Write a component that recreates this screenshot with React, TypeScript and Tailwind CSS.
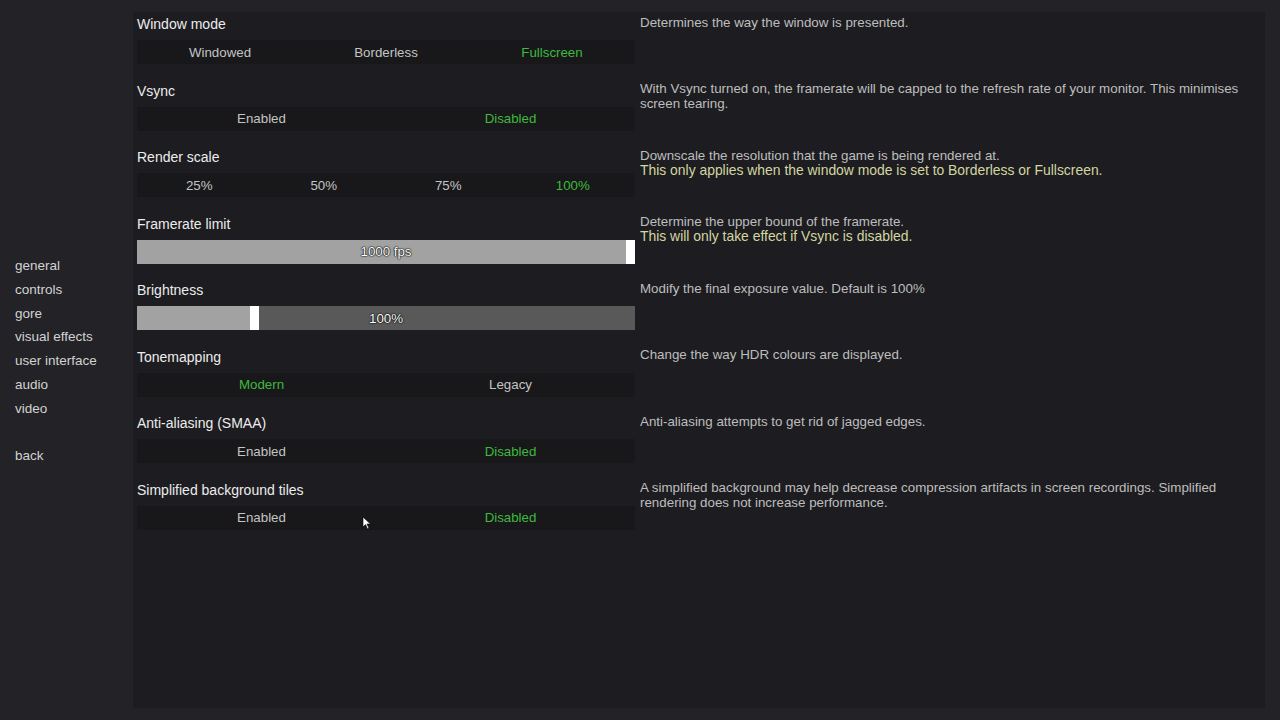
import React from "react";

type Opt = { kind: "options"; options: string[]; active: number };
type Slider = { kind: "slider"; text: string; fill: number; track: string };
type Row = {
  label: string;
  control: Opt | Slider;
  desc: string;
  note?: string;
};

const rows: Row[] = [
  {
    label: "Window mode",
    control: { kind: "options", options: ["Windowed", "Borderless", "Fullscreen"], active: 2 },
    desc: "Determines the way the window is presented.",
  },
  {
    label: "Vsync",
    control: { kind: "options", options: ["Enabled", "Disabled"], active: 1 },
    desc: "With Vsync turned on, the framerate will be capped to the refresh rate of your monitor. This minimises screen tearing.",
  },
  {
    label: "Render scale",
    control: { kind: "options", options: ["25%", "50%", "75%", "100%"], active: 3 },
    desc: "Downscale the resolution that the game is being rendered at.",
    note: "This only applies when the window mode is set to Borderless or Fullscreen.",
  },
  {
    label: "Framerate limit",
    control: { kind: "slider", text: "1000 fps", fill: 489, track: "#a2a2a2" },
    desc: "Determine the upper bound of the framerate.",
    note: "This will only take effect if Vsync is disabled.",
  },
  {
    label: "Brightness",
    control: { kind: "slider", text: "100%", fill: 113, track: "#595959" },
    desc: "Modify the final exposure value. Default is 100%",
  },
  {
    label: "Tonemapping",
    control: { kind: "options", options: ["Modern", "Legacy"], active: 0 },
    desc: "Change the way HDR colours are displayed.",
  },
  {
    label: "Anti-aliasing (SMAA)",
    control: { kind: "options", options: ["Enabled", "Disabled"], active: 1 },
    desc: "Anti-aliasing attempts to get rid of jagged edges.",
  },
  {
    label: "Simplified background tiles",
    control: { kind: "options", options: ["Enabled", "Disabled"], active: 1 },
    desc: "A simplified background may help decrease compression artifacts in screen recordings. Simplified rendering does not increase performance.",
  },
];

const nav = ["general", "controls", "gore", "visual effects", "user interface", "audio", "video"];

function Control({ c }: { c: Opt | Slider }) {
  if (c.kind === "options") {
    return (
      <div className="mt-[4px] flex h-[24px] bg-[#18181b] pt-[1px]">
        {c.options.map((o, i) => (
          <div
            key={o}
            className={
              "flex flex-1 items-center justify-center text-[13.3px] " +
              (i === c.active ? "text-[#3dba3d]" : "text-[#c4c4c4]")
            }
          >
            {o}
          </div>
        ))}
      </div>
    );
  }
  return (
    <div className="relative mt-[4px] flex h-[24px]" style={{ backgroundColor: c.track }}>
      <div className="h-full bg-[#a2a2a2]" style={{ width: c.fill }} />
      <div className="h-full w-[9px] bg-white" />
      <div className="absolute inset-0 flex items-center justify-center pt-[1px] text-[13.3px] text-white [text-shadow:0_0_2px_#000,0_0_1px_#000,0_0_1px_#000]">
        {c.text}
      </div>
    </div>
  );
}

export default function App() {
  return (
    <div
      className="relative flex h-[720px] w-[1280px] overflow-hidden bg-[#232327]"
      style={{ fontFamily: '"Liberation Sans", Arial, sans-serif' }}
    >
      <div className="flex w-[133px] shrink-0 flex-col pl-[15px] pt-[254px] text-[13.5px] leading-[23.8px] text-[#d2d2d2]">
        {nav.map((n) => (
          <div key={n}>{n}</div>
        ))}
        <div className="h-[23.8px]" />
        <div>back</div>
      </div>
      <div className="mt-[12px] flex h-[696px] w-[1132px] flex-col bg-[#1d1d21] pl-[4px]">
        {rows.map((r) => (
          <div key={r.label} className="flex h-[66.5px] shrink-0">
            <div className="w-[498px] shrink-0">
              <div className="h-[24px] text-[14px] leading-[24px] text-[#ececec]">{r.label}</div>
              <Control c={r.control} />
            </div>
            <div className="ml-[5px] w-[620px] pt-[2.5px] text-[13.35px] leading-[15px] text-[#bdbdbd]">
              <div>{r.desc}</div>
              {r.note && <div className="text-[13.9px] text-[#d3d6a0]">{r.note}</div>}
            </div>
          </div>
        ))}
      </div>
      <svg
        className="absolute left-[362px] top-[516px]"
        width="10"
        height="14"
        viewBox="0 0 10 14"
      >
        <path d="M1 1 L1 11 L3.5 8.6 L5.5 13 L7 12.3 L5 8 L8.5 8 Z" fill="#ffffff" stroke="#000" strokeWidth="0.6" />
      </svg>
    </div>
  );
}
